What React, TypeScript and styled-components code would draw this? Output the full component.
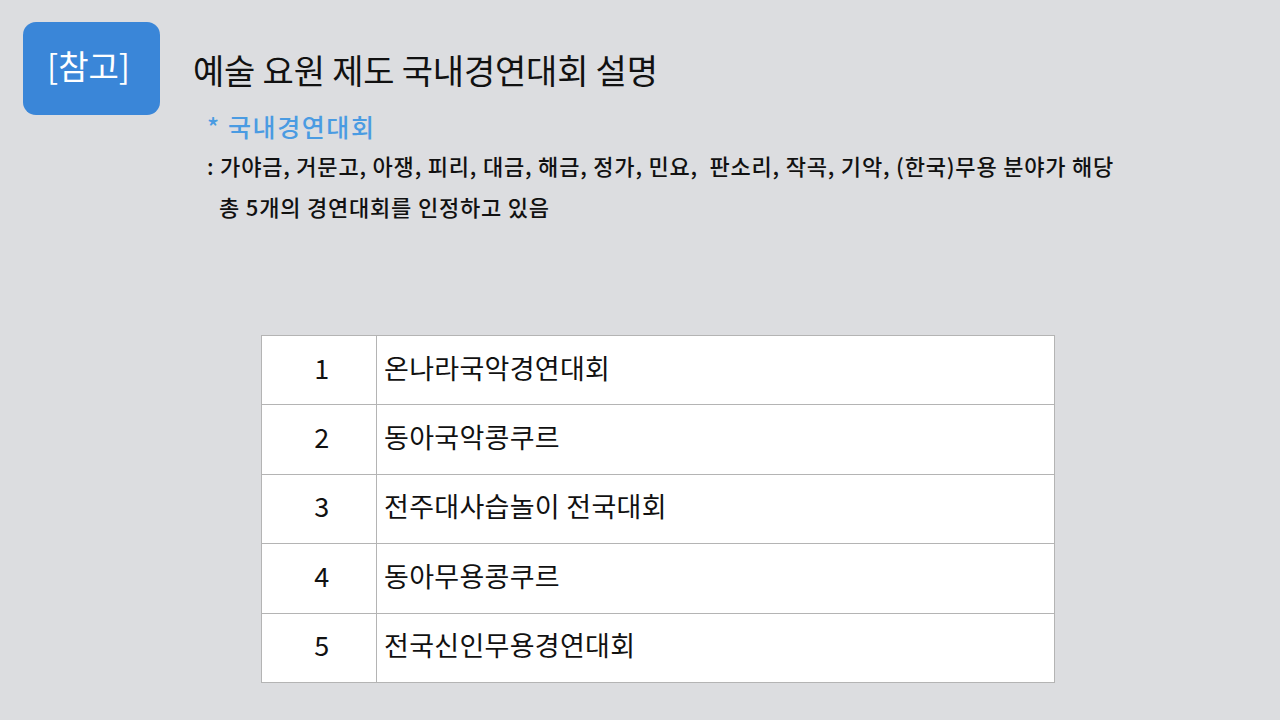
import React from 'react'
import styled, { createGlobalStyle } from 'styled-components'

const GlobalStyle = createGlobalStyle`
  html, body {
    margin: 0;
    padding: 0;
    background: #dcdde0;
  }
  body {
    font-family: "Noto Sans CJK KR", "Noto Sans", sans-serif;
    color: #111;
  }
`

const Slide = styled.div`
  width: 1280px;
  height: 720px;
  box-sizing: border-box;
  padding: 22px 0 0 23px;
  background: #dcdde0;
  display: flex;
  flex-direction: column;
`

const Header = styled.div`
  display: flex;
  align-items: flex-start;
  gap: 33px;
`

const Badge = styled.div`
  width: 137px;
  height: 93px;
  border-radius: 13px;
  background: #3a86d8;
  color: #fff;
  display: flex;
  align-items: center;
  justify-content: center;
  padding-bottom: 8px;
  padding-right: 6px;
  box-sizing: border-box;
  font-size: 33px;
`

const Title = styled.h1`
  margin: 26px 0 0;
  font-size: 34px;
  font-weight: 400;
  line-height: 44px;
  letter-spacing: -0.2px;
`

const Notes = styled.div`
  margin: 0 0 0 184px;
  display: flex;
  flex-direction: column;
`

const NoteHead = styled.div`
  margin-top: -7px;
  color: #4a9be2;
  font-size: 25px;
  font-weight: 500;
  line-height: 36px;
  letter-spacing: 1.6px;
`

const NoteLine = styled.div<{ $indent?: boolean }>`
  margin-top: ${p => (p.$indent ? '3px' : '2px')};
  padding-left: ${p => (p.$indent ? '12px' : '0')};
  font-size: 22px;
  font-weight: 500;
  line-height: 38px;
  letter-spacing: 0.8px;
  white-space: nowrap;
`

const Table = styled.table`
  margin: 110px 0 0 238px;
  width: 794px;
  border-collapse: collapse;
  background: #fff;
`

const Row = styled.tr`
  height: 69.4px;
`

const Cell = styled.td<{ $num?: boolean }>`
  padding: 0 0 5px ${p => (p.$num ? '6px' : '7px')};
  border: 1px solid #b4b4b4;
  width: ${p => (p.$num ? '115px' : 'auto')};
  text-align: ${p => (p.$num ? 'center' : 'left')};
  vertical-align: middle;
  box-sizing: border-box;
  font-size: 27px;
  line-height: 36px;
  letter-spacing: 0.3px;
`

const rows = [
  '온나라국악경연대회',
  '동아국악콩쿠르',
  '전주대사습놀이 전국대회',
  '동아무용콩쿠르',
  '전국신인무용경연대회',
]

export default function App() {
  return (
    <>
      <GlobalStyle />
      <Slide>
        <Header>
          <Badge>[참고]</Badge>
          <Title>예술 요원 제도 국내경연대회 설명</Title>
        </Header>
        <Notes>
          <NoteHead>* 국내경연대회</NoteHead>
          <NoteLine>
            : 가야금, 거문고, 아쟁, 피리, 대금, 해금, 정가, 민요,&nbsp; 판소리, 작곡, 기악, (한국)무용 분야가 해당
          </NoteLine>
          <NoteLine $indent>총 5개의 경연대회를 인정하고 있음</NoteLine>
        </Notes>
        <Table>
          <tbody>
            {rows.map((name, i) => (
              <Row key={name}>
                <Cell $num>{i + 1}</Cell>
                <Cell>{name}</Cell>
              </Row>
            ))}
          </tbody>
        </Table>
      </Slide>
    </>
  )
}
